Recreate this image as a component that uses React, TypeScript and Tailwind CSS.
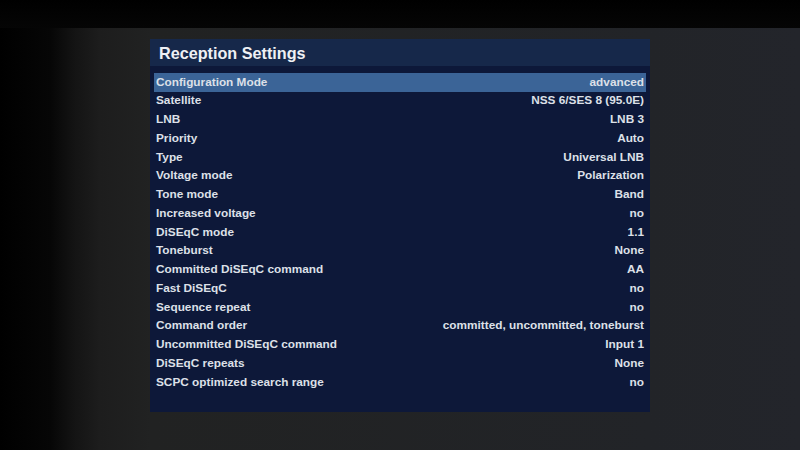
import React from "react";

interface Setting {
    label: string;
    value: string;
}

const settings: Setting[] = [
    { label: "Configuration Mode", value: "advanced" },
    { label: "Satellite", value: "NSS 6/SES 8 (95.0E)" },
    { label: "LNB", value: "LNB 3" },
    { label: "Priority", value: "Auto" },
    { label: "Type", value: "Universal LNB" },
    { label: "Voltage mode", value: "Polarization" },
    { label: "Tone mode", value: "Band" },
    { label: "Increased voltage", value: "no" },
    { label: "DiSEqC mode", value: "1.1" },
    { label: "Toneburst", value: "None" },
    { label: "Committed DiSEqC command", value: "AA" },
    { label: "Fast DiSEqC", value: "no" },
    { label: "Sequence repeat", value: "no" },
    { label: "Command order", value: "committed, uncommitted, toneburst" },
    { label: "Uncommitted DiSEqC command", value: "Input 1" },
    { label: "DiSEqC repeats", value: "None" },
    { label: "SCPC optimized search range", value: "no" },
];

const SettingRow: React.FC<Setting & { selected?: boolean }> = ({ label, value, selected }) => (
    <div
        className={`flex h-[18.75px] items-center justify-between px-[2px] ${
            selected ? "bg-[#3b6497]" : ""
        }`}
    >
        <span>{label}</span>
        <span>{value}</span>
    </div>
);

export default function App() {
    return (
        <div className="flex h-[450px] w-[800px] flex-col overflow-hidden bg-black font-['Liberation_Sans',Arial,sans-serif]">
            <div className="h-[28px] bg-[linear-gradient(to_bottom,#000000,#050505)]" />
            <div className="flex-1 bg-[linear-gradient(to_right,#000000_0px,#060606_50px,#141414_75px,#1d1d1d_100px,#212222_150px,#222428_650px,#23252b_800px)] pt-[11px]">
                <div className="ml-[150px] w-[500px]">
                    <div className="flex h-[27px] items-center bg-[#16284a] pl-[9px] pt-[2px] text-[16.2px] font-bold text-[#eef0f4]">
                        Reception Settings
                    </div>
                    <div className="bg-[#0d1839] px-[4px] pb-[20px] pt-[7px] text-[11.8px] font-bold text-[#dde0e8]">
                        {settings.map((s, i) => (
                            <SettingRow key={s.label} {...s} selected={i === 0} />
                        ))}
                    </div>
                </div>
            </div>
        </div>
    );
}
